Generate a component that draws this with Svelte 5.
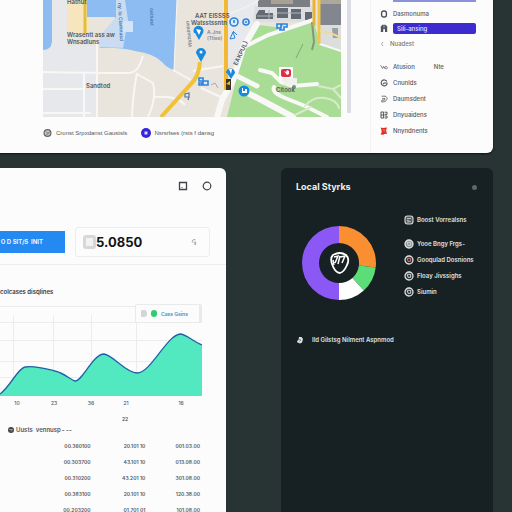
<script lang="ts">
  const mainLinks = [
    { label: 'Dasmonuma', icon: 'ring', active: false },
    { label: 'Sili-ansing', icon: 'gate', active: true },
    { label: 'Nuadest', icon: 'back', active: false },
  ];

  const moreLinks = [
    { label: 'Atusion', icon: 'wave', note: 'Nte' },
    { label: 'Cnunlds', icon: 'gee' },
    { label: 'Daumsdent', icon: 'pea' },
    { label: 'Dnyuaidens', icon: 'grid' },
    { label: 'Nnyndnents', icon: 'flag' },
  ];

  const columns = [13, 53, 91, 136];
  const lines = [2, 18, 36, 57, 73];
  const ticks = [
    { x: 17, label: '10' },
    { x: 54, label: '23' },
    { x: 91, label: '36' },
    { x: 126, label: '21' },
    { x: 181, label: '16' },
  ];

  const rows = [
    ['00.360100', '20.101 10', '001.03.00'],
    ['00.303700', '43.101 10', '013.08.00'],
    ['00.310200', '43.201 10', '301.08.00'],
    ['00.383100', '20.101 10', '120.38.00'],
    ['00.203200', '01.701 01', '101.08.00'],
  ];

  const sources = [
    { label: 'Boost Vorrealsns', mark: 'box' },
    { label: 'Yooe Bngy Frgs-', mark: 'light' },
    { label: 'Gooqulad Dosnions', mark: 'red' },
    { label: 'Floay Jivssighs', mark: 'dark' },
    { label: 'Siumin', mark: 'dark' },
  ];

  let amount = '5.0850';
</script>

{#snippet icon(name: string)}
  <svg class="icon" viewBox="0 0 8 8" aria-hidden="true">
    {#if name === 'ring'}
      <rect x="1.6" y="1" width="4.8" height="6" rx="2" fill="none" stroke="#4d5358" stroke-width="1.4" />
    {:else if name === 'gate'}
      <path d="M.8 8V2.5L2.5.8h3L7.2 2.5V8H5V5.2H3.2V8z" fill="#4d5560" />
      <path d="M3 2.4h2M4 1v4" stroke="#aab" stroke-width=".6" />
    {:else if name === 'back'}
      <path d="M3 2L1.5 4 3 6" fill="none" stroke="#999" stroke-width=".8" />
    {:else if name === 'wave'}
      <path d="M.6 2.2l2 3.4 1-2.4 1 2.2M4.6 5.4c0-3 3-2.2 2.8-.4-.2 1.5-2.6 1-2-.6" fill="none" stroke="#777" stroke-width=".9" />
    {:else if name === 'gee'}
      <path d="M6.8 2.4A3 3 0 1 0 7 5V4H4.2L3 5" fill="none" stroke="#555" stroke-width="1.1" />
    {:else if name === 'pea'}
      <path d="M1.6 1.2h3.4a2.2 2.2 0 0 1 1.8 3.2C6.2 6.5 4 7 1.8 7V5.2h2.6L5 3.4l-3 .4" fill="none" stroke="#777" stroke-width="1" />
    {:else if name === 'grid'}
      <path d="M1 1h2.6v6H1zM1 4h2.6M4.6 1.2H7v2.2H4.6M4.6 5H7v2H4.6" fill="none" stroke="#555" stroke-width="1" />
    {:else if name === 'flag'}
      <path d="M.8.6l2 .5L7 .4 6 3.3l1 3.8-2-.3-2 1-2.4-.4L1.8 5z" fill="#e8271c" />
      <path d="M2.5 2.6l3 .6M2.8 5l1-.8 1.4 1" stroke="#ffb9b0" stroke-width=".6" />
    {/if}
  </svg>
{/snippet}

<div class="page">
  <section class="top-card">
    <div class="map-column">
      <div class="map-row">
        <svg class="map" viewBox="0 0 298 117" role="img" aria-label="City map">
          <rect width="298" height="117" fill="#e9e5dc" />
          <path d="M0 46H54V117H0z" fill="#e7e8eb" />
          <path d="M9 0h15v46H0z" fill="#e8e8ea" />
          <path d="M24 0h22v32q-11 3-22 0z" fill="#f7e6bd" />
          <path d="M0 0H9V42Q8 50 0 50z" fill="#8cbcf2" />
          <path d="M44 0h30v17H44z" fill="#8cbcf2" />
          <path d="M72 0H134L131 70Q124 68 119 62Q112 54 92 51Q76 47 56 48L72 40z" fill="#8cbcf2" />
          <path d="M57 36L73 17V0h9l3 20-5 28-24-1z" fill="#c9dcf1" />
          <rect x="80" y="21" width="10" height="11" fill="#d4e4f5" />

          <path d="M180 0h36v23l-14 22-16 18h-6z" fill="#e8e9ed" />
          <path d="M212 6h58v16h-60z" fill="#dcdee1" />
          <path d="M215 0h52v7h-52z" fill="#7b7f83" />
          <path d="M228 0h22v4h-22z" fill="#a9a294" />
          <path d="M216 10h6v3h8v6h-17v-4zM234 8h11v10h-11zM248 9h10v10h-10zM262 12h7v8h-7z" fill="#646a73" />
          <path d="M214 16h18M234 13h24M226 10v9" stroke="#b0b4ba" />
          <path d="M277 3h21v22h-21z" fill="#82868f" />
          <path d="M277 0h21v4h-21z" fill="#aca89c" />
          <path d="M277 25h21v27l-21-8z" fill="#dcdedd" />
          <path d="M289 28h6v10h-5z" fill="#989fa5" />

          <path d="M216 25L240 28 270 20 277 43 298 52V117H184L192 84 203 46z" fill="#a9dd96" />
          <g fill="none" stroke="#f8f8f7" stroke-linecap="round">
            <path d="M203 46L225 35 270 20" stroke-width="4" />
            <path d="M214 24L200 48 190 80 179 100 174 117" stroke-width="6" />
            <path d="M192 75L214 86" stroke-width="5" />
            <path d="M199 90L224 103 250 117" stroke-width="6" />
            <path d="M217 70L229 73 238 82 250 86 274 84M231 87Q228 92 242 98L262 106 284 117" stroke-width="4" />
            <path d="M277 44L298 51" stroke-width="2" />
          </g>
          <g fill="none" stroke="#d8eacb" stroke-width="2" stroke-linecap="round">
            <path d="M275 86L290 89 298 85M290 89L298 98M262 106Q270 96 282 98T296 108M252 115L268 107" />
          </g>
          <g fill="none" stroke="#f8f7f4" stroke-width="2" stroke-linejoin="round">
            <path d="M54 42V117M0 72Q50 73 86 73Q94 72 97 64L100 56M94 73Q90 92 89 117M94 74L110 83Q114 98 105 117M41 73V117M0 89H41M112 97Q134 95 142 105M130 70L148 80" />
            <path d="M0 113H48M150 71L180 66M158 88L180 98" />
            <path d="M134 0L131 70M216 0Q196 12 180 15" stroke-width="1" />
          </g>
          <path d="M253 58L260 44" fill="none" stroke="#7ca676" />
          <path d="M269 22L271 42 269 50" fill="none" stroke="#8a9478" stroke-width="2" />
          <g fill="none">
            <path d="M42 0V33" stroke="#e5bd3c" stroke-width="3" />
            <path d="M118 117L148 84Q156 76 157 62" stroke="#f0c23a" stroke-width="4" />
            <path d="M183 0V90" stroke="#f3b936" stroke-width="4" />
            <path d="M271 0V26" stroke="#e9b234" stroke-width="3" />
            <path d="M276 0V44" stroke="#f3c445" stroke-width="3" />
            <path d="M277 31Q288 32 298 38" stroke="#f0d999" stroke-width="2" />
          </g>
          <path d="M183 79h5v11h-5z" fill="#3a3524" />
          <path d="M183 84l4-3v4z" fill="#f3b936" />

          <g fill="#178ae0">
            <path d="M151 33a5 5 0 1 1 9 0l-4 7-4-7z" />
            <path d="M153 53a5 5 0 1 1 10 0l-5 9-5-9z" />
            <path d="M183 73a4 4 0 1 1 9 0l-4 6-4-6z" />
            <circle cx="201" cy="91" r="5.5" />
          </g>
          <g fill="#fff">
            <path d="M153 29l3 6 2-5z" />
            <circle cx="158" cy="52" r="1.5" />
            <path d="M186 69h3l-1 5z" />
            <path d="M199 88h1v3h2v-2h2v4h-5z" />
          </g>
          <g fill="#dcebfa" stroke="#2d84dc" stroke-width="1.6">
            <circle cx="191" cy="22" r="4" />
            <circle cx="203" cy="22" r="3" />
            <path d="M191 20v3M203 21v2" />
            <path d="M187 39l3-7 2 6zM190 31l4 4" stroke-width="1" />
            <path d="M156 78h4v3h-4zM160 81h5v4h-5zM156 83h3v2h-3z" />
            <path d="M234 24h4v4h-4zM239 24h5v3h-3v3h-4z" />
            <path d="M168 85l4-2 3 5" stroke="#9aa9cf" stroke-width="1" fill="none" />
            <path d="M142 94l4-1v4h-4zM146 97l-1 3" stroke="#5a7096" stroke-width="1.2" />
          </g>
          <rect x="236" y="67" width="14" height="13" rx="1" fill="#fff" />
          <path d="M238 78h16v7h-12z" fill="#eef1ec" />
          <rect x="238" y="69" width="10" height="8" rx="2" fill="#dc2f43" />
          <path d="M241 71l2 1 1-2 2 1v3l-2 1z" fill="#fff" />
          <circle cx="251" cy="87" r="2" fill="#73907a" />

          <g class="map-text">
            <text x="24" y="4">Hatnut</text>
            <text x="24" y="37">Wrasentt ass aw</text>
            <text x="24" y="44">Wnsadluns</text>
            <text x="43" y="88">Sandtod</text>
            <text x="152" y="18">AAT EISSSS</text>
            <text x="148" y="25">Watsstssntn</text>
            <text class="faint" x="164" y="34">A.Jns</text>
            <text class="faint" x="164" y="40">(Ttiss)</text>
            <text x="233" y="92">Cltook</text>
            <text transform="translate(194 66) rotate(-65)">EAKPUL)</text>
            <text class="faint" transform="translate(149 47) rotate(-97)">Watsalnisn</text>
            <text class="water" transform="translate(75 3) rotate(87)">ny. lo Clamnasd</text>
            <text class="water" transform="translate(107 8) rotate(89)">oatsast</text>
          </g>
        </svg>
        <div class="map-scroll"></div>
      </div>
      <div class="map-footer">
        <span class="credit">
          <svg class="credit-icon" viewBox="0 0 10 10" aria-hidden="true">
            <circle cx="4.5" cy="5" r="3.4" fill="#c9c9c9" stroke="#666" stroke-width="1.2" />
            <path d="M3 3.5l2 2 2-2M5 5.5L3.5 7" fill="none" stroke="#666" />
          </svg>
          Cronst Srpxdanst Gaustsls
        </span>
        <span class="credit">
          <svg class="credit-icon" viewBox="0 0 10 10" aria-hidden="true">
            <circle cx="5" cy="5" r="5" fill="#3525dc" />
            <path d="M3.5 3.5h3v3h-3z" fill="#d8d8ff" />
          </svg>
          Nsrsrlses (rsts f dansg
        </span>
      </div>
    </div>

    <nav class="sidebar">
      <div class="strip"></div>
      {#each mainLinks as link}
        <a href="#main" class="nav-link" class:back={link.icon === 'back'}>
          {@render icon(link.icon)}
          <span class="nav-label" class:active={link.active}>{link.label}</span>
        </a>
      {/each}
      <div class="more">
        {#each moreLinks as link}
          <a href="#more" class="nav-link tall">
            {@render icon(link.icon)}
            <span class="nav-label">{link.label}</span>
            {#if link.note}<span class="note">{link.note}</span>{/if}
          </a>
        {/each}
      </div>
    </nav>
  </section>

  <div class="bottom">
    <section class="report">
      <div class="tools">
        <button class="tool" aria-label="Expand">
          <svg viewBox="0 0 10 10"><path d="M1.5 1.5h7v7h-7z" fill="none" stroke="#3f4348" stroke-width="1.3" /><path d="M3 6.5h2" stroke="#aaa" /></svg>
        </button>
        <button class="tool" aria-label="Refresh">
          <svg viewBox="0 0 10 10"><circle cx="5" cy="5" r="3.8" fill="none" stroke="#3f4348" stroke-width="1.2" /></svg>
        </button>
      </div>

      <div class="controls">
        <button class="primary">O D SIT/S&nbsp; INIT</button>
        <div class="amount">
          <input type="checkbox" aria-label="Use amount" />
          <input type="text" aria-label="Amount" bind:value={amount} />
          <svg class="amount-icon" viewBox="0 0 8 8" aria-hidden="true"><path d="M5.5 1.8C3 .8 1.6 3 2.4 4.6M3.6 4.2h2v2.4L4 5.8" fill="none" stroke="#999" stroke-width=".9" /></svg>
        </div>
      </div>

      <h2>colcases disqlines</h2>

      <div class="chart">
        <svg viewBox="0 0 202 104" role="img" aria-label="Daily values">
          <g stroke="#ececee">
            {#each lines as y}<path d="M0 {y}.5H202" />{/each}
            {#each columns as x}<path d="M{x}.5 11V92" />{/each}
          </g>
          <path d="M0 90C10 83 18 64 25 63C34 61 47 65 55 67C64 69 71 76 75 77C82 78 93 50 104 50C113 51 126 69 137 69C151 69 166 32 180 30C186 30 192 37 202 41V92H0z" fill="#53e9c0" />
          <path d="M0 90C10 83 18 64 25 63C34 61 47 65 55 67C64 69 71 76 75 77C82 78 93 50 104 50C113 51 126 69 137 69C151 69 166 32 180 30C186 30 192 37 202 41" fill="none" stroke="#1f62a8" stroke-width="1.3" />
          {#each ticks as tick}
            <text x={tick.x} y="101" text-anchor="middle">{tick.label}</text>
          {/each}
        </svg>
        <div class="legend">
          <span class="off"></span>
          <span class="on"></span>
          Cass Gsins
        </div>
      </div>

      <table>
        <caption>
          <span class="page-number">22</span>
          <span class="caption-line">
            <svg class="icon" viewBox="0 0 8 8" aria-hidden="true"><circle cx="4" cy="4" r="3" fill="#444" /><path d="M2 3.5h3.5L4 5.5" stroke="#bbb" stroke-width=".7" fill="none" /></svg>
            Uusts&nbsp; vennusp <i>- --</i>
          </span>
        </caption>
        <tbody>
          {#each rows as row}
            <tr>{#each row as cell}<td>{cell}</td>{/each}</tr>
          {/each}
        </tbody>
      </table>
    </section>

    <section class="local">
      <header>
        <h1>Local Styrks</h1>
        <button class="dot" aria-label="Options"></button>
      </header>
      <div class="breakdown">
        <svg class="donut" viewBox="-37 -37 74 74" role="img" aria-label="Share by source">
          <path d="M0 37A37 37 0 0 1 0-37V-20A20 20 0 0 0 0 20z" fill="#8b58f5" />
          <path d="M0-37A37 37 0 0 1 36.7 4.5L19.9 2.4A20 20 0 0 0 0-20z" fill="#f98f30" />
          <path d="M36.7 4.5A37 37 0 0 1 24.8 27.5L13.4 14.9A20 20 0 0 0 19.9 2.4z" fill="#5bdd78" />
          <path d="M24.8 27.5A37 37 0 0 1 0 37V20A20 20 0 0 0 13.4 14.9z" fill="#fff" />
          <path d="M-6-8Q1-12 7-8Q11-4 8 2Q5 9 1 10Q-4 10-7 1Q-9-5-6-8z" fill="none" stroke="#fff" stroke-width="1.8" />
          <path d="M-5-6L-1-7-4 0M1-7L-1 1M1-6L6-7 3 0M-6-3L-5 2" fill="none" stroke="#fff" stroke-width="1.5" />
        </svg>
        <ul>
          {#each sources as source}
            <li>
              <svg class="mark" viewBox="0 0 10 10" aria-hidden="true">
                {#if source.mark === 'box'}
                  <rect x="1" y="1" width="8" height="8" rx="2.5" fill="#59605f" stroke="#d5d8d8" stroke-width="1.1" />
                  <path d="M3 3.5h4M3 5l4 2M3 7h2" stroke="#d5d8d8" stroke-width=".8" />
                {:else}
                  <circle cx="5" cy="5" r="4" fill={source.mark === 'light' ? '#8c9392' : '#252d2e'} stroke="#dfe2e2" stroke-width="1.3" />
                  <path d="M3.3 3.3h3.4v3H4z" fill="none" stroke={source.mark === 'red' ? '#dd7777' : '#d5d8d8'} stroke-width="1" />
                {/if}
              </svg>
              {source.label}
            </li>
          {/each}
        </ul>
      </div>
      <p>
        <svg class="icon" viewBox="0 0 8 8" aria-hidden="true"><path d="M3 1h2.5L7 3 6 6.5 4 7.5 1.5 6.5 1 5l1.5-1z" fill="#dfe2e2" /><path d="M3 3l2 1-2 1.5" stroke="#555" stroke-width=".6" fill="none" /></svg>
        Ild Gilstsg Nilment Aspnmod
      </p>
    </section>
  </div>
</div>

<style>
  :global(body) {
    background: #283433;
  }

  .page {
    height: 100vh;
    overflow: hidden;
    display: flex;
    flex-direction: column;
    gap: 15px;
    padding-right: 19px;
    box-sizing: border-box;
    font-family: Inter, "Liberation Sans", sans-serif;
    font-size: 6px;
    line-height: 8px;
    color: #55585c;
  }

  button {
    font: inherit;
    border: none;
    padding: 0;
    cursor: pointer;
  }

  a {
    color: inherit;
    text-decoration: none;
  }

  .icon {
    width: 8px;
    height: 8px;
    flex: none;
  }

  .top-card {
    display: grid;
    grid-template-columns: 1fr 123px;
    background: #fcfcfc;
    border-radius: 0 0 6px 0;
    box-shadow: 0 1px 2px #0d1516;
  }

  .map-column {
    padding: 0 19px 10px 43px;
  }

  .map-row {
    display: flex;
    gap: 6px;
  }

  .map {
    flex: 1;
    min-width: 0;
    display: block;
  }

  .map-text {
    font-size: 6px;
    font-weight: 600;
    fill: #55575c;
  }

  .faint {
    font-size: 5px;
    fill: #85878c;
  }

  .water {
    font-size: 5px;
    fill: #3f78b8;
  }

  .map-scroll {
    width: 4px;
    margin-bottom: 4px;
    background: #dcdde4;
  }

  .map-footer {
    display: flex;
    gap: 14px;
    height: 20px;
    margin-top: 6px;
    align-items: center;
  }

  .credit {
    display: flex;
    align-items: center;
    gap: 3px;
    font-weight: 500;
    font-family: "Liberation Sans", sans-serif;
    white-space: nowrap;
  }

  .credit-icon {
    width: 10px;
    height: 10px;
  }

  .sidebar {
    border-left: 1px solid #f2f2f3;
    padding: 0 17px 14px 9px;
  }

  .strip {
    height: 2px;
    margin: 0 0 5px 13px;
    background: #8b92dc;
  }

  .nav-link {
    display: flex;
    align-items: center;
    gap: 5px;
    height: 14px;
    font-weight: 500;
  }

  .back {
    height: 18px;
    gap: 2px;
    color: #777;
  }

  .tall {
    height: 16px;
  }

  .more {
    margin-top: 6px;
  }

  .active {
    flex: 1;
    padding: 2px 4px 1px;
    border-radius: 2px;
    background: #3e2bd0;
    color: #e4e0ff;
  }

  .note {
    margin-left: 14px;
  }

  .bottom {
    flex: 1;
    min-height: 0;
    display: grid;
    grid-template-columns: 226fr 212fr;
    gap: 55px;
  }

  .report {
    min-width: 0;
    overflow: hidden;
    background: #fcfcfc;
    border-radius: 0 6px 0 0;
  }

  .tools {
    display: flex;
    justify-content: flex-end;
    gap: 14px;
    padding: 13px 14px 36px 0;
  }

  .tool {
    width: 10px;
    height: 10px;
    background: none;
  }

  .tool svg {
    display: block;
  }

  .controls {
    display: flex;
    align-items: center;
    gap: 10px;
    padding: 0 16px 7px 0;
    border-bottom: 1px solid #eeeeef;
  }

  .primary {
    width: 65px;
    height: 22px;
    padding-right: 22px;
    background: #2489f0;
    color: #e9f4ff;
    font-weight: 700;
    text-align: right;
    white-space: nowrap;
  }

  .amount {
    flex: 1;
    min-width: 0;
    display: flex;
    align-items: center;
    height: 30px;
    box-sizing: border-box;
    padding: 0 11px 0 7px;
    border: 1px solid #ececee;
    border-radius: 3px;
  }

  .amount input[type='checkbox'] {
    appearance: none;
    width: 13px;
    height: 14px;
    box-sizing: border-box;
    margin: 0;
    border: 3px solid #d6d7d8;
    border-radius: 3px;
    background: #f2f2f2;
  }

  .amount input[type='text'] {
    flex: 1;
    min-width: 0;
    border: none;
    padding: 0;
    background: none;
    color: #121416;
    font: 700 13px/16px Inter, "Liberation Sans", sans-serif;
  }

  .amount-icon {
    width: 8px;
    height: 8px;
  }

  h2 {
    margin: 23px 0 8px;
    font-size: 6px;
    line-height: 8px;
    font-weight: 600;
    color: #34373b;
  }

  .chart {
    position: relative;
    margin-right: 24px;
  }

  .chart svg {
    display: block;
    width: 100%;
  }

  .chart text {
    font-size: 5px;
    font-weight: 500;
    fill: #55585c;
  }

  .legend {
    position: absolute;
    top: 0;
    right: 0;
    display: flex;
    align-items: center;
    gap: 4px;
    width: 67px;
    height: 19px;
    box-sizing: border-box;
    padding-left: 5px;
    border: 1px solid #e9eaec;
    border-right-width: 3px;
    border-radius: 2px;
    background: #fcfcfc;
    color: #2f93cc;
    font-size: 5px;
    font-weight: 600;
    white-space: nowrap;
  }

  .legend span {
    width: 6px;
    height: 7px;
  }

  .off {
    border-radius: 1px 3px 3px 1px;
    background: #d2d5db;
  }

  .on {
    border-radius: 3px;
    background: #2bcf72;
  }

  table {
    width: 100%;
    padding: 0 26px 0 36px;
    border-spacing: 0;
    table-layout: fixed;
    font-weight: 600;
  }

  caption {
    text-align: left;
    padding: 7px 0 4px 7px;
  }

  .page-number {
    display: block;
    padding-left: 115px;
    font-size: 5px;
  }

  .caption-line {
    display: flex;
    align-items: center;
    gap: 1px;
    margin-top: 3px;
  }

  td {
    height: 16px;
    padding: 0;
    text-align: right;
    font-size: 5px;
    line-height: 8px;
    white-space: nowrap;
  }

  .local {
    min-width: 0;
    background: #172123;
    border-radius: 6px 6px 0 0;
    color: #dfe2e2;
    font-weight: 600;
  }

  header {
    display: flex;
    align-items: center;
    justify-content: space-between;
    padding: 12px 16px 0 15px;
  }

  h1 {
    margin: 0;
    font-size: 9px;
    line-height: 14px;
    font-weight: 700;
    color: #eef0f0;
  }

  .dot {
    width: 5px;
    height: 5px;
    border-radius: 50%;
    background: #5f6768;
  }

  .breakdown {
    display: flex;
    align-items: flex-start;
    gap: 28px;
    padding: 18px 8px 0 21px;
  }

  .donut {
    width: 74px;
    margin-top: 14px;
    flex: none;
  }

  ul {
    list-style: none;
    margin: 0;
    padding: 0;
  }

  li {
    display: flex;
    align-items: center;
    gap: 3px;
    height: 16px;
    white-space: nowrap;
  }

  li:first-child {
    margin-bottom: 8px;
  }

  .mark {
    width: 10px;
    height: 10px;
  }

  p {
    display: flex;
    align-items: center;
    gap: 8px;
    margin: 36px 0 0 15px;
  }
</style>
